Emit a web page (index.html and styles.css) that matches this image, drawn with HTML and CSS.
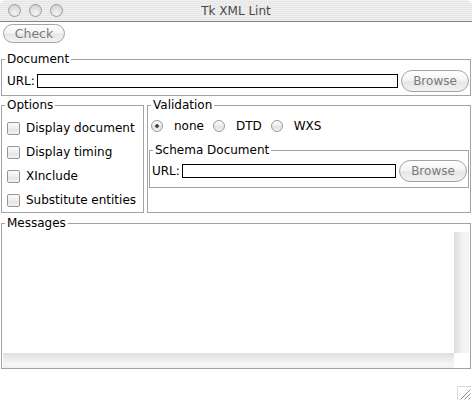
FILE: index.html
```html
<!DOCTYPE html>
<html>
<head>
<meta charset="utf-8">
<title>Tk XML Lint</title>
<link rel="stylesheet" href="styles.css">
</head>
<body>
<div class="window">
  <div class="titlebar">
    <div class="lights"><span class="light"></span><span class="light"></span><span class="light"></span></div>
    <div class="title">Tk XML Lint</div>
    <div></div>
  </div>
  <div class="toolbar"><button class="btn check">Check</button></div>
  <fieldset class="group doc">
    <legend>Document</legend>
    <div class="url-row doc-row">
      <span class="url-label">URL:</span><span class="entry"></span><button class="btn browse">Browse</button>
    </div>
  </fieldset>
  <div class="middle">
    <fieldset class="group options">
      <legend>Options</legend>
      <div class="opts">
        <div class="check-row"><span class="checkbox"></span>Display document</div>
        <div class="check-row"><span class="checkbox"></span>Display timing</div>
        <div class="check-row"><span class="checkbox"></span>XInclude</div>
        <div class="check-row"><span class="checkbox"></span>Substitute entities</div>
      </div>
    </fieldset>
    <fieldset class="group validation">
      <legend>Validation</legend>
      <div class="radios">
        <span class="radio on"></span><span class="rlabel">none</span>
        <span class="radio"></span><span class="rlabel">DTD</span>
        <span class="radio"></span><span class="rlabel">WXS</span>
      </div>
      <fieldset class="group schema">
        <legend>Schema Document</legend>
        <div class="url-row schema-row">
          <span class="url-label">URL:</span><span class="entry"></span><button class="btn browse">Browse</button>
        </div>
      </fieldset>
    </fieldset>
  </div>
  <fieldset class="group messages">
    <legend>Messages</legend>
    <div class="msgarea">
      <div class="text"></div>
      <div class="vscroll"></div>
      <div class="hscroll"></div>
      <div class="corner"></div>
    </div>
  </fieldset>
  <div class="status">
    <svg class="grip" width="14" height="14" viewBox="0 0 14 14">
      <path d="M0.5 14V0.5H14" fill="none" stroke="#d8d8d8"/>
      <path d="M13.5 3.5L3.5 13.5M13.5 7.5L7.5 13.5M13.5 11.5L11.5 13.5" stroke="#8a8a8a" stroke-width="1"/>
      <path d="M13.5 5L5 13.5M13.5 9L9 13.5" stroke="#ffffff" stroke-width="1"/>
    </svg>
  </div>
</div>
</body>
</html>
```
FILE: styles.css
```css
html, body {
  margin: 0;
  padding: 0;
  background: #ffffff;
}
body {
  font-family: "DejaVu Sans", "Liberation Sans", sans-serif;
  font-size: 12px;
  color: #000;
}
.window {
  width: 472px;
  height: 401px;
  display: flex;
  flex-direction: column;
  overflow: hidden;
}
.titlebar {
  height: 21px;
  border-bottom: 1px solid #858585;
  border-radius: 6px 6px 0 0;
  background: repeating-linear-gradient(to bottom, #efefef 0, #efefef 1px, #e6e6e6 1px, #e6e6e6 2px);
  display: grid;
  grid-template-columns: 1fr auto 1fr;
  align-items: center;
  flex: none;
}
.lights {
  display: flex;
  gap: 8px;
  padding-left: 8px;
}
.light {
  width: 13px;
  height: 13px;
  box-sizing: border-box;
  border-radius: 50%;
  border: 1px solid #9d9d9d;
  background: radial-gradient(circle at 50% 75%, #f4f4f4 0, #dcdcdc 60%, #c8c8c8 100%);
}
.title {
  color: #4a4a4a;
  font-size: 12px;
  line-height: 14px;
}
.toolbar {
  flex: none;
  height: 30px;
  padding-left: 3px;
  box-sizing: border-box;
  padding-top: 2px;
}
.btn {
  font-family: "DejaVu Sans", "Liberation Sans", sans-serif;
  font-size: 12px;
  color: #7a7a7a;
  border: 1px solid #a4a4a4;
  border-radius: 11px;
  background: linear-gradient(to bottom, #ffffff 0%, #f4f4f4 45%, #e6e6e6 55%, #f2f2f2 100%);
  padding: 0;
  margin: 0;
  box-sizing: border-box;
}
.check {
  width: 62px;
  height: 19px;
  line-height: 17px;
  font-size: 12.5px;
}
.group {
  margin: 0;
  padding: 0;
  border: 1px solid #a3a3a3;
  min-inline-size: 0;
}
.group > legend {
  padding: 0 2px;
  margin-left: 3px;
  line-height: 14px;
  font-size: 12px;
}
.doc {
  margin: 0 1px;
  flex: none;
}
.url-row {
  display: flex;
  align-items: center;
}
.doc-row {
  height: 22px;
  padding: 4px 1px 3px 5px;
}
.url-label {
  margin-right: 2px;
}
.entry {
  flex: 1;
  height: 14px;
  box-sizing: border-box;
  border: 1px solid #000;
  background: #fff;
}
.browse {
  width: 68px;
  height: 22px;
  margin-left: 3px;
  line-height: 20px;
}
.middle {
  flex: none;
  display: flex;
  gap: 3px;
  margin: 2px 1px 0 1px;
  height: 115px;
}
.options {
  width: 143px;
  box-sizing: border-box;
}
.opts {
  padding: 4px 0 0 5px;
}
.check-row {
  height: 24px;
  display: flex;
  align-items: center;
  white-space: nowrap;
}
.checkbox {
  width: 13px;
  height: 13px;
  box-sizing: border-box;
  border: 1px solid #979797;
  border-radius: 2px;
  background: linear-gradient(to bottom, #fdfdfd 0%, #ececec 50%, #e2e2e2 51%, #f4f4f4 100%);
  margin-right: 6px;
}
.validation {
  flex: 1;
}
.radios {
  display: flex;
  align-items: center;
  height: 20px;
  padding: 4px 0 0 3px;
}
.radio {
  width: 12px;
  height: 12px;
  box-sizing: border-box;
  border: 1px solid #9a9a9a;
  border-radius: 50%;
  background: linear-gradient(to bottom, #fdfdfd 0%, #ececec 50%, #e0e0e0 51%, #f4f4f4 100%);
  margin-right: 11px;
}
.radio.on {
  background: radial-gradient(circle, #3a3a3a 0, #3a3a3a 1.4px, transparent 2.2px), linear-gradient(to bottom, #fdfdfd 0%, #ececec 50%, #e0e0e0 51%, #f4f4f4 100%);
}
.rlabel {
  margin-right: 9px;
}
.schema {
  margin: 7px 1px 0 1px;
}
.schema-row {
  height: 22px;
  padding: 3px 1px 5px 2px;
}
.messages {
  margin: 3px 1px 0 1px;
  flex: none;
}
.msgarea {
  height: 138px;
  box-sizing: border-box;
  padding: 2px 1px 0 1px;
  display: grid;
  grid-template-columns: 1fr 15px;
  grid-template-rows: 1fr 15px;
}
.text {
  background: #fff;
}
.vscroll {
  background: linear-gradient(to right, #dcdcdc 0%, #ebebeb 40%, #f7f7f7 80%, #efefef 100%);
}
.hscroll {
  background: linear-gradient(to bottom, #dedede 0%, #ececec 40%, #f7f7f7 80%, #efefef 100%);
}
.corner {
  background: #fff;
}
.status {
  flex: 1;
  display: flex;
  justify-content: flex-end;
  align-items: flex-end;
  padding: 0 1px 1px 0;
}
.grip {
  display: block;
}
```
